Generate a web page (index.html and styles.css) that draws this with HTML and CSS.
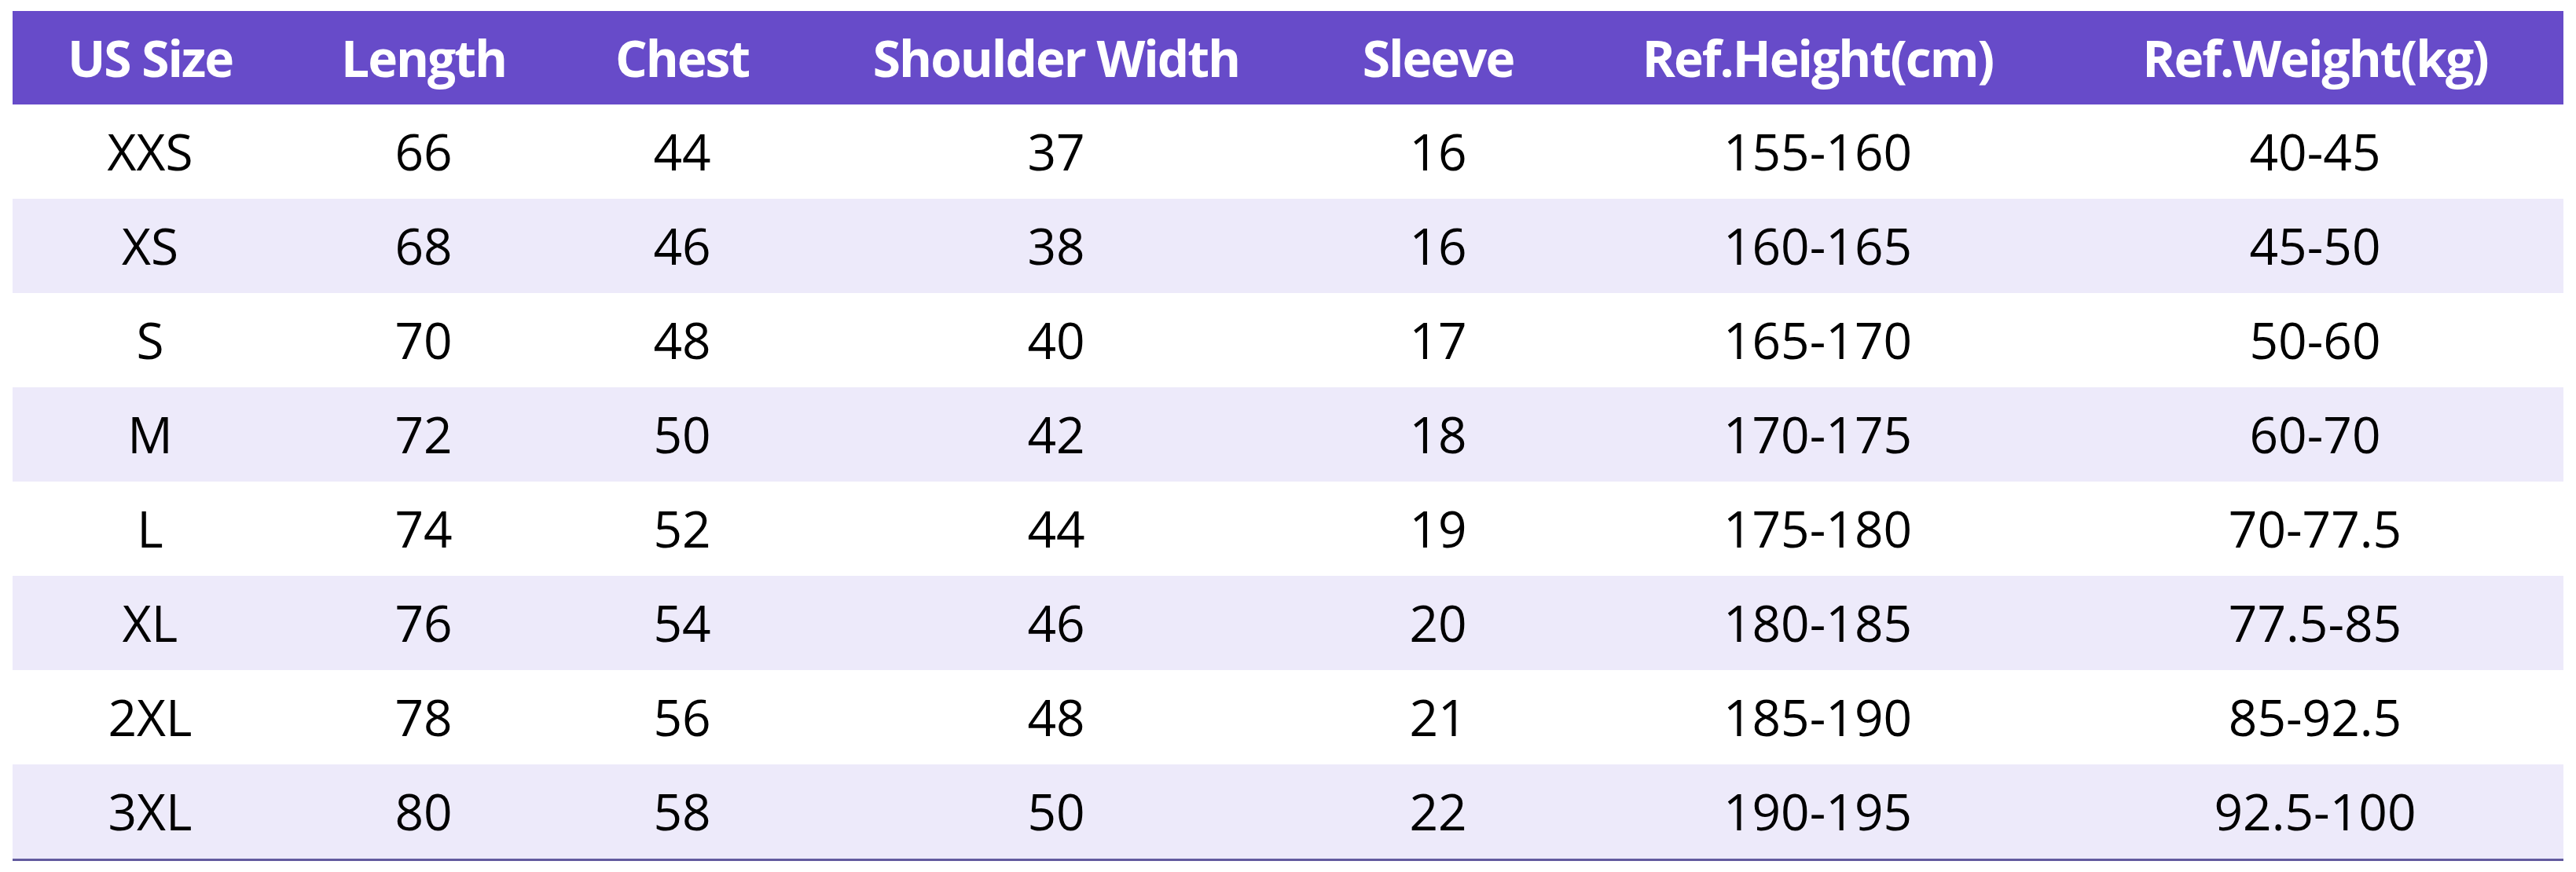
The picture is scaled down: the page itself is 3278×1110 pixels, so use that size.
FILE: index.html
```html
<!DOCTYPE html>
<html lang="en">
<head>
<meta charset="utf-8">
<title>Size Chart</title>
<link rel="stylesheet" href="styles.css">
</head>
<body>
<div class="page">
  <div class="chart">
    <div class="row head">
      <div class="cell">US Size</div><div class="cell">Length</div><div class="cell">Chest</div><div class="cell">Shoulder Width</div><div class="cell">Sleeve</div><div class="cell">Ref.Height(cm)</div><div class="cell">Ref.Weight(kg)</div>
    </div>
    <div class="row">
      <div class="cell">XXS</div><div class="cell">66</div><div class="cell">44</div><div class="cell">37</div><div class="cell">16</div><div class="cell">155-160</div><div class="cell">40-45</div>
    </div>
    <div class="row alt">
      <div class="cell">XS</div><div class="cell">68</div><div class="cell">46</div><div class="cell">38</div><div class="cell">16</div><div class="cell">160-165</div><div class="cell">45-50</div>
    </div>
    <div class="row">
      <div class="cell">S</div><div class="cell">70</div><div class="cell">48</div><div class="cell">40</div><div class="cell">17</div><div class="cell">165-170</div><div class="cell">50-60</div>
    </div>
    <div class="row alt">
      <div class="cell">M</div><div class="cell">72</div><div class="cell">50</div><div class="cell">42</div><div class="cell">18</div><div class="cell">170-175</div><div class="cell">60-70</div>
    </div>
    <div class="row">
      <div class="cell">L</div><div class="cell">74</div><div class="cell">52</div><div class="cell">44</div><div class="cell">19</div><div class="cell">175-180</div><div class="cell">70-77.5</div>
    </div>
    <div class="row alt">
      <div class="cell">XL</div><div class="cell">76</div><div class="cell">54</div><div class="cell">46</div><div class="cell">20</div><div class="cell">180-185</div><div class="cell">77.5-85</div>
    </div>
    <div class="row">
      <div class="cell">2XL</div><div class="cell">78</div><div class="cell">56</div><div class="cell">48</div><div class="cell">21</div><div class="cell">185-190</div><div class="cell">85-92.5</div>
    </div>
    <div class="row alt last">
      <div class="cell">3XL</div><div class="cell">80</div><div class="cell">58</div><div class="cell">50</div><div class="cell">22</div><div class="cell">190-195</div><div class="cell">92.5-100</div>
    </div>
  </div>
</div>
</body>
</html>
```
FILE: styles.css
```css
html, body {
  margin: 0;
  padding: 0;
  background: #ffffff;
}

.page {
  padding: 14px 0 0 16px;
}

.chart {
  width: 3246px;
  font-family: "Open Sans", "Noto Sans", sans-serif;
  color: #000000;
}

.row {
  display: grid;
  grid-template-columns: 350px 346px 312px 640px 332px 634px 632px;
  height: 120px;
  background: #ffffff;
}

.row.head {
  height: 119px;
  background: #674bc9;
  color: #ffffff;
  font-weight: 700;
  letter-spacing: -2px;
}

.row.alt {
  background: #edeafa;
}

.row.last {
  border-bottom: 3px solid #625a9e;
}

.cell {
  display: flex;
  align-items: center;
  justify-content: center;
  font-size: 64px;
  line-height: 1;
  white-space: nowrap;
}
```
